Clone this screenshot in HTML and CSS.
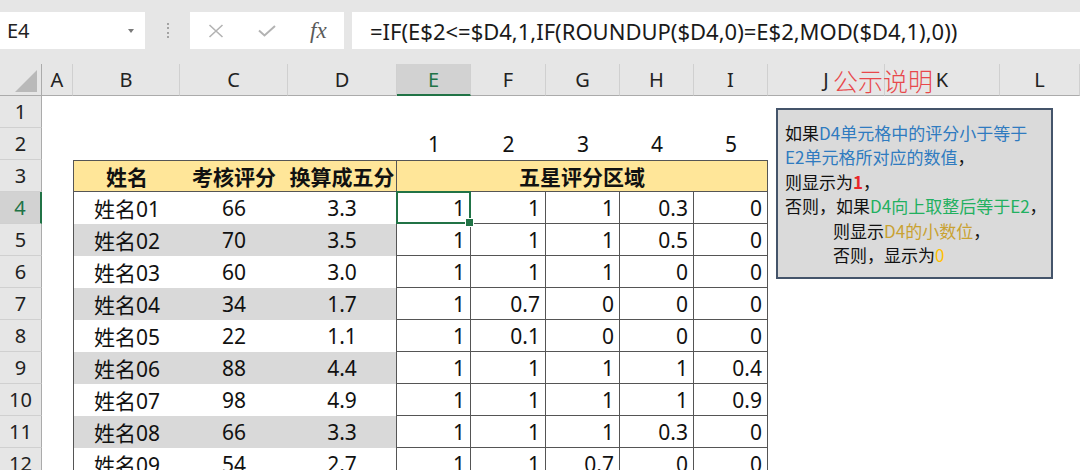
FILE: index.html
```html
<!DOCTYPE html>
<html lang="zh">
<head>
<meta charset="utf-8">
<title>五星评分</title>
<link rel="stylesheet" href="styles.css">
</head>
<body>
<div class="toolbar">
  <div class="namebox"><span>E4</span><span class="caret"></span></div>
  <div class="grip"><i></i><i></i><i></i><i></i></div>
  <div class="fxbox">
    <svg width="16" height="14" viewBox="0 0 16 14"><path d="M1.5 1 L14.5 13 M14.5 1 L1.5 13" stroke="#b3b3b3" stroke-width="1.6" fill="none"/></svg>
    <svg width="18" height="12" viewBox="0 0 18 12"><path d="M1 5.5 L6.5 10.5 L17 1" stroke="#b3b3b3" stroke-width="2" fill="none"/></svg>
    <span class="fx">fx</span>
  </div>
  <div class="formula">=IF(E$2&lt;=$D4,1,IF(ROUNDUP($D4,0)=E$2,MOD($D4,1),0))</div>
</div>

<div class="sheet">
  <div class="ch corner"><svg width="41" height="31" viewBox="0 0 41 31"><polygon points="15,28 37,28 37,6" fill="#b9b9b9"/></svg></div>
  <div class="ch">A</div><div class="ch">B</div><div class="ch">C</div><div class="ch">D</div>
  <div class="ch csel">E</div><div class="ch">F</div><div class="ch">G</div><div class="ch">H</div>
  <div class="ch">I</div><div class="ch">J</div><div class="ch">K</div><div class="ch">L</div>

  <div class="rh">1</div><div class="s12"></div>

  <div class="rh">2</div><div class="s4"></div>
  <div class="num">1</div><div class="num">2</div><div class="num">3</div><div class="num">4</div><div class="num">5</div>
  <div class="s3"></div>

  <div class="rh">3</div><div></div>
  <div class="hd first">姓名</div><div class="hd">考核评分</div><div class="hd last">换算成五分</div>
  <div class="hd merge">五星评分区域</div>
  <div class="s3"></div>

  <div class="rh rsel">4</div><div></div>
  <div class="nm first">姓名01</div><div class="nm">66</div><div class="nm last">3.3</div>
  <div class="v sel">1</div><div class="v">1</div><div class="v">1</div><div class="v">0.3</div><div class="v">0</div>
  <div class="s3"></div>

  <div class="rh">5</div><div></div>
  <div class="nm first band">姓名02</div><div class="nm band">70</div><div class="nm last band">3.5</div>
  <div class="v">1</div><div class="v">1</div><div class="v">1</div><div class="v">0.5</div><div class="v">0</div>
  <div class="s3"></div>

  <div class="rh">6</div><div></div>
  <div class="nm first">姓名03</div><div class="nm">60</div><div class="nm last">3.0</div>
  <div class="v">1</div><div class="v">1</div><div class="v">1</div><div class="v">0</div><div class="v">0</div>
  <div class="s3"></div>

  <div class="rh">7</div><div></div>
  <div class="nm first band">姓名04</div><div class="nm band">34</div><div class="nm last band">1.7</div>
  <div class="v">1</div><div class="v">0.7</div><div class="v">0</div><div class="v">0</div><div class="v">0</div>
  <div class="s3"></div>

  <div class="rh">8</div><div></div>
  <div class="nm first">姓名05</div><div class="nm">22</div><div class="nm last">1.1</div>
  <div class="v">1</div><div class="v">0.1</div><div class="v">0</div><div class="v">0</div><div class="v">0</div>
  <div class="s3"></div>

  <div class="rh">9</div><div></div>
  <div class="nm first band">姓名06</div><div class="nm band">88</div><div class="nm last band">4.4</div>
  <div class="v">1</div><div class="v">1</div><div class="v">1</div><div class="v">1</div><div class="v">0.4</div>
  <div class="s3"></div>

  <div class="rh">10</div><div></div>
  <div class="nm first">姓名07</div><div class="nm">98</div><div class="nm last">4.9</div>
  <div class="v">1</div><div class="v">1</div><div class="v">1</div><div class="v">1</div><div class="v">0.9</div>
  <div class="s3"></div>

  <div class="rh">11</div><div></div>
  <div class="nm first band">姓名08</div><div class="nm band">66</div><div class="nm last band">3.3</div>
  <div class="v">1</div><div class="v">1</div><div class="v">1</div><div class="v">0.3</div><div class="v">0</div>
  <div class="s3"></div>

  <div class="rh">12</div><div></div>
  <div class="nm first">姓名09</div><div class="nm">54</div><div class="nm last">2.7</div>
  <div class="v">1</div><div class="v">1</div><div class="v">0.7</div><div class="v">0</div><div class="v">0</div>
  <div class="s3"></div>

  <div class="stamp">公示说明</div>

  <div class="note">
    <div>如果<span class="blue">D4单元格中的评分小于等于</span></div>
    <div><span class="blue">E2单元格所对应的数值</span>，</div>
    <div>则显示为<span class="red">1</span>，</div>
    <div>否则，如果<span class="green">D4向上取整后等于E2</span>，</div>
    <div class="indent">则显示<span class="gold">D4的小数位</span>，</div>
    <div class="indent">否则，显示为<span class="orange">0</span></div>
  </div>
</div>
</body>
</html>
```

FILE: styles.css
```css
* { box-sizing: border-box; margin: 0; padding: 0; }
html, body { width: 1080px; height: 470px; overflow: hidden; background: #fff; }
body { font-family: "Noto Sans", "Noto Sans CJK SC", sans-serif; color: #1a1a1a; }

.toolbar { height: 64px; background: #e6e6e6; display: flex; align-items: flex-start; padding-top: 12px; }
.namebox { width: 145px; height: 37px; background: #fff; display: flex; align-items: center; justify-content: space-between; padding: 0 11px 0 7px; font-size: 20px; color: #222; }
.caret { width: 0; height: 0; border-left: 3.5px solid transparent; border-right: 3.5px solid transparent; border-top: 4px solid #7a7a7a; }
.grip { width: 45px; height: 37px; display: flex; flex-direction: column; align-items: center; justify-content: center; gap: 2.5px; }
.grip i { display: block; width: 2px; height: 2px; background: #a3a3a3; }
.fxbox { width: 154px; height: 37px; background: #fff; display: grid; grid-template-columns: repeat(3, 1fr); align-items: center; justify-items: center; }
.fx { font-family: "Liberation Serif", serif; font-style: italic; font-size: 23px; color: #5a5a5a; line-height: 1; }
.formula { flex: 1; margin-left: 8px; height: 37px; background: #fff; padding-left: 18px; font-size: 22px; color: #1a1a1a; display: flex; align-items: center; white-space: nowrap; overflow: hidden; }

.sheet { position: relative; display: grid; grid-template-columns: 42px 31px 107px 108px 109px 74px 75px 74px 74px 74px 117px 115px 80px; grid-auto-rows: 32px; font-size: 21px; }
.sheet > div { display: flex; align-items: center; justify-content: center; white-space: nowrap; }

.ch { background: #e6e6e6; border-right: 1px solid #d0d0d0; border-bottom: 1px solid #ababab; font-size: 20px; color: #222; }
.corner { border-right-color: #ababab; }
.rh { background: #e6e6e6; border-right: 1px solid #ababab; border-bottom: 1px solid #d0d0d0; font-size: 20px; color: #222; }
.csel { background: #d2d2d2; color: #217346; border-bottom: 2px solid #217346; }
.rsel { background: #d2d2d2; color: #217346; border-right: 2px solid #217346; }

.s12 { grid-column: span 12; }
.s4 { grid-column: span 4; }
.s3 { grid-column: span 3; }

.hd { background: #ffe699; border-top: 1px solid #555; border-bottom: 1px solid #555; font-weight: 700; color: #111; }
.merge { grid-column: span 5; border-right: 1px solid #555; }
.first { border-left: 1px solid #555; }
.last { border-right: 1px solid #555; }
.nm { color: #111; }
.band { background: #d9d9d9; }
.num { color: #111; }
.sheet > .v { justify-content: flex-end; padding-right: 5px; border-right: 1px solid #555; border-bottom: 1px solid #555; color: #111; }

.sel { position: relative; }
.sel::after { content: ""; position: absolute; left: -1px; top: -1px; right: -1px; bottom: -1px; border: 2px solid #217346; z-index: 1; }
.sel::before { content: ""; position: absolute; right: -4px; bottom: -4px; width: 7px; height: 7px; background: #217346; border: 1px solid #fff; z-index: 2; }

.sheet > .stamp { position: absolute; left: 833px; top: 0; height: 32px; font-family: "Noto Sans CJK SC", sans-serif; font-size: 25px; font-weight: 300; color: #e8484b; }

.sheet > .note { position: absolute; left: 776px; top: 44px; width: 277px; height: 171px; display: block; background: #dadada; border: 2px solid #44546a; padding: 11px 4px 0 7px; font-family: "Noto Sans CJK SC", sans-serif; font-size: 17px; line-height: 24.4px; color: #111; white-space: nowrap; }
.indent { padding-left: 48px; }
.blue { color: #2f7bc0; }
.green { color: #22b060; }
.gold { color: #c9a232; }
.red { color: #e8262a; font-weight: 700; }
.orange { color: #ffc000; }
```
